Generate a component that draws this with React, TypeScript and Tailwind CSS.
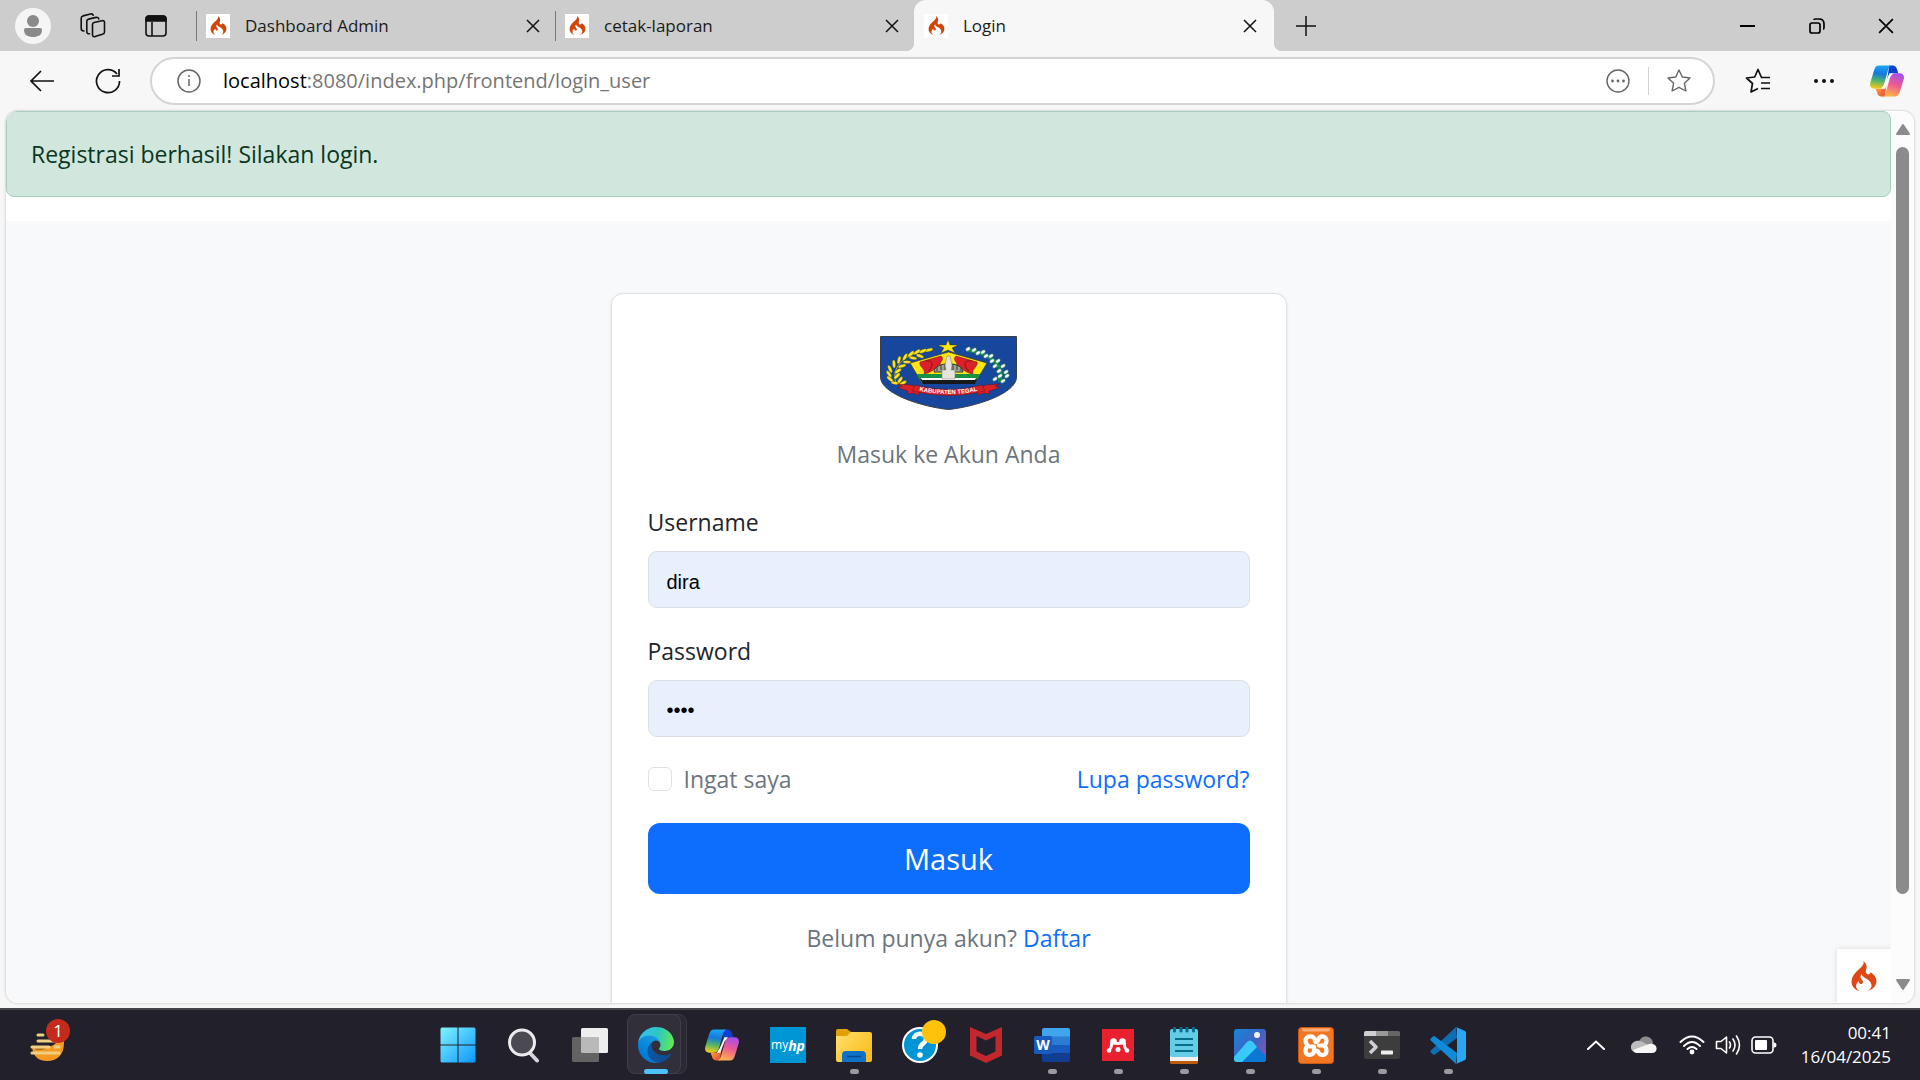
import React from "react";
import { SiCodeigniter } from "react-icons/si";

function EdgeIcon() {
  return (
    <svg viewBox="0 0 256 256" className="size-9" aria-hidden="true">
      <defs>
        <linearGradient id="edgeDeep" x1="60" y1="170" x2="235" y2="170" gradientUnits="userSpaceOnUse">
          <stop offset="0" stopColor="#0c59a4" />
          <stop offset="1" stopColor="#114a8b" />
        </linearGradient>
        <linearGradient id="edgeBlue" x1="155" y1="80" x2="45" y2="220" gradientUnits="userSpaceOnUse">
          <stop offset="0" stopColor="#1b9de2" />
          <stop offset="1" stopColor="#0078d7" />
        </linearGradient>
        <linearGradient id="edgeTeal" x1="0" y1="60" x2="256" y2="120" gradientUnits="userSpaceOnUse">
          <stop offset="0" stopColor="#35c1f1" />
          <stop offset="0.5" stopColor="#2cc6c6" />
          <stop offset="1" stopColor="#66eb4a" />
        </linearGradient>
      </defs>
      <path fill="url(#edgeDeep)" d="M231 190.5c-3.4 1.8-6.9 3.4-10.5 4.7-11.5 4.3-23.6 6.5-35.9 6.5-47.3 0-88.5-32.5-88.5-74.3.1-11.4 6.4-21.9 16.4-27.3-42.8 1.8-53.8 46.4-53.8 72.5 0 73.9 68.1 81.4 82.8 81.4 7.9 0 19.8-2.3 27-4.6l1.3-.4c27.6-9.5 51-28.1 66.6-52.8 1.2-1.9.6-4.3-1.2-5.5-1.3-.8-2.9-.9-4.2-.2z" />
      <path fill="url(#edgeBlue)" d="M105.7 241.4c-8.9-5.5-16.6-12.8-22.7-21.3-26.3-36-18.4-86.5 17.6-112.8 3.8-2.7 7.7-5.2 11.9-7.2 3.1-1.5 8.4-4.1 15.5-4 10.1.1 19.6 4.9 25.7 13 4 5.4 6.3 11.9 6.4 18.7 0-.2 24.5-79.6-80-79.6C36.2 48.2 0 90 0 126.6c-.2 19.3 4 38.5 12.1 56 27.6 58.8 94.8 87.6 156.4 67.1-21.1 6.6-44.1 3.6-62.8-8.3z" />
      <path fill="url(#edgeTeal)" d="M152.3 148.9c-.9 1-3.4 2.5-3.4 5.6 0 2.6 1.7 5.2 4.8 7.3 14.3 10 41.4 8.6 41.5 8.6 10.7 0 21.1-2.9 30.3-8.3 18.8-11 30.4-31.1 30.4-52.9.3-22.4-8-37.3-11.3-43.9C223.5 23.9 177.7 0 128 0 58 0 1 56.2 0 126.2c.5-36.5 36.8-66 80-66 3.5 0 23.5.3 42 10.1 16.3 8.6 24.9 18.9 30.8 29.2 6.2 10.7 7.3 24.1 7.3 29.5s-2.7 13.3-7.8 19.9z" />
    </svg>
  );
}

function CopilotIcon() {
  return (
    <svg viewBox="0 0 48 44" className="h-8 w-[34px]" aria-hidden="true">
      <defs>
        <linearGradient id="cpLeft" x1="14" y1="0" x2="9" y2="33" gradientUnits="userSpaceOnUse">
          <stop offset="0" stopColor="#1ba5f5" />
          <stop offset="0.35" stopColor="#1578dc" />
          <stop offset="0.65" stopColor="#4fb46a" />
          <stop offset="1" stopColor="#ffcb12" />
        </linearGradient>
        <linearGradient id="cpRight" x1="40" y1="11" x2="30" y2="44" gradientUnits="userSpaceOnUse">
          <stop offset="0" stopColor="#a24df0" />
          <stop offset="0.5" stopColor="#ee5b91" />
          <stop offset="1" stopColor="#ffb14a" />
        </linearGradient>
        <linearGradient id="cpBottom" x1="10" y1="33" x2="22" y2="44" gradientUnits="userSpaceOnUse">
          <stop offset="0" stopColor="#ff9a3c" />
          <stop offset="1" stopColor="#e5443c" />
        </linearGradient>
      </defs>
      <path fill="#1140cf" d="M27 0h5c3 0 5 2 6 5l2 6h-7c-4 0-6 3-7 6l-2 5z" />
      <path fill="url(#cpBottom)" d="M21 44h-5c-3 0-5-2-6-5l-2-6h7c4 0 6-3 7-6l2-5z" />
      <path fill="url(#cpLeft)" d="M13 0H31c-3 0-4.500 3-5.500 6L20 26c-1.500 5-4 7-8 7H6c-5 0-7-4-5.500-9L6 6C7.500 2 9 0 13 0z" />
      <path fill="url(#cpRight)" d="M35 44H17c3 0 4.500-3 5.500-6L28 18c1.500-5 4-7 8-7H42c5 0 7 4 5.500 9L42 38c-1.500 4-3 6-7 6z" />
      <path fill="#fff" d="M27.500 11h5l-5 6-6 16h-5l4-6z" />
    </svg>
  );
}

const leftLeaves = [
  [49, 14, -15], [43, 15, -25], [37, 16, -35], [31, 18, -45], [40, 20, 20], [33, 22, 10],
  [25, 21, -60], [19, 24, -75], [27, 26, 0], [14, 28, -95], [22, 30, -15], [10, 33, -115],
  [18, 35, -35], [9, 38, -125], [17, 40, -45], [10, 43, -140], [20, 44, -55], [15, 47, 10], [23, 47, -30],
];
const rightLeaves = [
  [88, 13], [94, 14], [98, 17], [103, 16], [106, 20], [111, 20], [112, 25], [118, 25],
  [115, 30], [123, 30], [119, 35], [126, 36], [120, 40], [127, 40], [115, 43], [123, 45],
];

function Emblem() {
  return (
    <svg viewBox="0 0 137 74" className="mx-auto h-[74px] w-[137px]" role="img" aria-label="Kabupaten Tegal">
      <path d="M.5 .5H136.500V41C136.500 58 94 71 68.500 73.500 43 71 .5 58 .5 41z" fill="#16479c" stroke="#3d4043" />
      <path d="M68 4l2 5h8l-6 3 3 5-7-3-7 3 3-5-6-3h8z" fill="#ffe512" stroke="#363a28" strokeWidth=".4" />
      <path d="M49 14C28 17 10 29 16 47" fill="none" stroke="#d9c51b" strokeWidth=".8" />
      {leftLeaves.map(([x, y, r]) => (
        <ellipse key={`${x}-${y}`} cx={x} cy={y} rx="4" ry="1.600" fill="#ffe512" stroke="#2d3425" strokeWidth=".3" transform={`rotate(${r} ${x} ${y})`} />
      ))}
      <path d="M87 14C108 17 127 29 119 46" fill="none" stroke="#0d8a4a" strokeWidth="3.500" />
      {rightLeaves.map(([x, y]) => (
        <ellipse key={`${x}-${y}`} cx={x} cy={y} rx="2.700" ry="1.700" fill="#fff" stroke="#14734a" strokeWidth=".5" transform={`rotate(-35 ${x} ${y})`} />
      ))}
      <path d="M68.500 16L107 27 95 47H42L30 27z" fill="#ffe512" stroke="#393b1f" strokeWidth=".7" />
      <path d="M40 26L61 20C65 24 60 25 60 29 54 33 51 37 44 38 46 33 38 30 40 26zM97 26L76 20C72 24 77 25 77 29 83 33 86 37 93 38 91 33 99 30 97 26z" fill="#dc2027" stroke="#5b1513" strokeWidth=".5" />
      <path d="M45 25q8-1 7 4t-4 6M92 25q-8-1-7 4t4 6" fill="none" stroke="#681718" strokeWidth=".8" />
      <path d="M54 36c0-11 29-11 29 0z" fill="#9fa392" stroke="#393b34" />
      <path d="M57 35V31M61 34V29M65 34V28M73 34V28M77 34V29M81 35V31" stroke="#393b34" />
      <path d="M37 38h25v-3h13v3h25l-3 6H40z" fill="#189143" />
      <path d="M40 43h57l-2 5H43z" fill="#17191b" />
      <path d="M41 42h55l-1 2H42z" fill="#fff" />
      <path d="M67 20h3l2 9-1 5h4v9H62v-9h4l-1-5z" fill="#e4e5de" stroke="#747969" strokeWidth=".5" />
      <path d="M17 48l14 1 8 3v7l-6-2-5 1 0-3-10-3 4-2zM120 48l-14 1-8 3v7l6-2 5 1v-3l10-3-4-2z" fill="#dc2027" stroke="#65191b" strokeWidth=".5" />
      <path d="M35 49q34 9 67 0l3 6q-36 9-73 0z" fill="#dc2027" stroke="#65191b" strokeWidth=".5" />
      <path id="ribbonLine" d="M36 54q33 8 65 0" fill="none" />
      <text fill="#fff" className="text-[6px] font-bold" style={{ fontFamily: "Liberation Sans, sans-serif" }}>
        <textPath href="#ribbonLine" startOffset="50%" textAnchor="middle">KABUPATEN TEGAL</textPath>
      </text>
    </svg>
  );
}

function Flame({ className }: { className: string }) {
  return <SiCodeigniter className={className} aria-hidden="true" />;
}

function CloseGlyph({ className }: { className: string }) {
  return (
    <svg viewBox="0 0 14 14" className={className} fill="none" stroke="currentColor" strokeWidth="1.500" aria-hidden="true">
      <path d="M1 1l12 12M13 1L1 13" />
    </svg>
  );
}

function Tab({ title, active = false }: { title: string; active?: boolean }) {
  return (
    <div
      className={
        active
          ? "relative flex h-full w-[360px] items-center rounded-t-xl bg-[#f7f7f7] pl-[10px] pr-3"
          : "flex h-full w-[359px] items-center pr-[10px]"
      }
    >
      {active ? (
        <>
          <span className="absolute bottom-0 -left-2 size-2 bg-[radial-gradient(circle_at_0_0,#cdcdcd_8px,#f7f7f7_8px)]" />
          <span className="absolute bottom-0 -right-2 size-2 bg-[radial-gradient(circle_at_100%_0,#cdcdcd_8px,#f7f7f7_8px)]" />
        </>
      ) : (
        <span className="mr-[9px] h-[30px] w-px bg-[#777]" />
      )}
      <button className="flex flex-1 items-center gap-[15px] text-left text-[17px] text-[#1b1b1b]">
        <span className="flex size-6 items-center justify-center bg-white">
          <Flame className="size-[19px] text-[#cf4409]" />
        </span>
        {title}
      </button>
      <button aria-label={`Close ${title}`} className="flex size-6 items-center justify-center">
        <CloseGlyph className="size-[14px]" />
      </button>
    </div>
  );
}

function TabStrip() {
  return (
    <header className="flex h-[51px] shrink-0 items-center bg-[#cdcdcd] text-[#111]">
      <div className="flex w-[196px] items-center pl-[15px]">
        <button aria-label="Profile" className="flex size-9 items-center justify-center rounded-full bg-[#f5f5f5]">
          <svg viewBox="0 0 20 24" className="h-6 w-5" fill="#8a8a8a" aria-hidden="true">
            <circle cx="10" cy="7" r="6" />
            <path d="M3 14h14q2 0 2 2c0 5-4 7-9 7s-9-2-9-7q0-2 2-2z" />
          </svg>
        </button>
        <button aria-label="Workspaces" className="ml-7 flex size-7 items-center justify-center">
          <svg viewBox="0 0 26 26" className="size-[26px]" fill="none" stroke="currentColor" strokeWidth="1.600" strokeLinejoin="round" strokeLinecap="round" aria-hidden="true">
            <path d="M14 9.500l8-1.800q2.500-.5 2.500 1.800v9.500q0 1.800-2 2.300L15 23.600q-2.500.6-2.500-1.800V11.500q0-1.600 1.500-2z" />
            <path d="M9.500 20.800q-2.700.2-2.700-2.300V8.300q0-1.800 1.800-2.200L16 4.400q2.500-.4 2.800 1.600" />
            <path d="M4 18q-2.800 0-2.800-2.500V5.200q0-1.800 1.800-2.300L10.500 1q2.200-.4 2.700 1.200" />
          </svg>
        </button>
        <button aria-label="Tab actions" className="ml-[35px] flex size-7 items-center justify-center">
          <svg viewBox="0 0 22 22" className="size-[22px]" fill="none" stroke="currentColor" strokeWidth="1.600" aria-hidden="true">
            <rect x="1" y="1" width="20" height="20" rx="3" />
            <path d="M1 6V4q0-3 3-3h14q3 0 3 3v2z" fill="currentColor" />
            <path d="M7 7v14" />
          </svg>
        </button>
      </div>
      <Tab title="Dashboard Admin" />
      <Tab title="cetak-laporan" />
      <Tab title="Login" active />
      <button aria-label="New tab" className="ml-5 flex size-6 items-center justify-center">
        <svg viewBox="0 0 20 20" className="size-5" fill="none" stroke="currentColor" strokeWidth="1.500" aria-hidden="true">
          <path d="M10 0v20M0 10h20" />
        </svg>
      </button>
      <div className="ml-auto flex h-full items-center">
        <button aria-label="Minimize" className="flex h-full w-[69px] items-center justify-center">
          <span className="h-0.5 w-[15px] bg-black" />
        </button>
        <button aria-label="Restore" className="flex h-full w-[69px] items-center justify-center">
          <svg viewBox="0 0 16 16" className="size-4" fill="none" stroke="black" strokeWidth="1.700" aria-hidden="true">
            <rect x="1" y="5" width="10" height="10" rx="2" />
            <path d="M5 2q0-1 2-1h3q5 0 5 5v3q0 2-1 2" />
          </svg>
        </button>
        <button aria-label="Close window" className="flex h-full w-[69px] items-center justify-center text-black">
          <CloseGlyph className="size-4" />
        </button>
      </div>
    </header>
  );
}

function Toolbar() {
  return (
    <div className="flex h-[60px] shrink-0 items-center bg-[#f7f7f7] text-[#111]">
      <button aria-label="Back" className="ml-7 flex size-7 items-center justify-center">
        <svg viewBox="0 0 26 22" className="h-[22px] w-[26px]" fill="none" stroke="currentColor" strokeWidth="1.700" aria-hidden="true">
          <path d="M25 11H2M12 1L2 11l10 10" />
        </svg>
      </button>
      <button aria-label="Refresh" className="ml-[38px] flex size-7 items-center justify-center">
        <svg viewBox="0 0 26 26" className="size-[26px]" fill="none" stroke="currentColor" strokeWidth="1.700" aria-hidden="true">
          <path d="M24.500 13A11.500 11.500 0 1 1 22 6M24 1v7h-7" />
        </svg>
      </button>
      <div className="ml-7 flex h-12 flex-1 items-center rounded-full border-2 border-[#d4d4d4] bg-white pr-[22px] pl-[25px]">
        <button aria-label="Site information" className="text-[#666]">
          <svg viewBox="0 0 24 24" className="size-6" fill="none" stroke="currentColor" strokeWidth="1.500" aria-hidden="true">
            <circle cx="12" cy="12" r="11" />
            <path d="M12 10v7M12 6v2" />
          </svg>
        </button>
        <label htmlFor="address" className="ml-[22px] text-[20px] text-black">localhost</label>
        <input id="address" type="text" defaultValue=":8080/index.php/frontend/login_user" className="min-w-0 flex-1 bg-transparent text-[20px] text-[#757575] outline-none" />
        <button aria-label="More in address bar" className="text-[#666]">
          <svg viewBox="0 0 24 24" className="size-6" fill="none" stroke="currentColor" strokeWidth="1.400" aria-hidden="true">
            <circle cx="12" cy="12" r="11" />
            <g fill="currentColor" stroke="none">
              <circle cx="6.500" cy="12" r="1.400" />
              <circle cx="12" cy="12" r="1.400" />
              <circle cx="17.500" cy="12" r="1.400" />
            </g>
          </svg>
        </button>
        <span className="mx-[18px] h-7 w-px bg-[#d2d2d2]" />
        <button aria-label="Add to favorites" className="text-[#666]">
          <svg viewBox="0 0 24 24" className="size-6" fill="none" stroke="currentColor" strokeWidth="1.400" strokeLinejoin="round" aria-hidden="true">
            <path d="M12 1l3.300 7 7.700 1-5.600 5.300L18.900 22 12 18.300 5.100 22l1.500-7.700L1 9l7.700-1z" />
          </svg>
        </button>
      </div>
      <div className="flex items-center pl-[30px] pr-4">
        <button aria-label="Favorites">
          <svg viewBox="0 0 26 26" className="size-[26px]" fill="none" stroke="currentColor" strokeWidth="1.700" strokeLinejoin="round" aria-hidden="true">
            <path d="M25 9.500h-8.500L13 1.500 9.700 9 1.500 10l6 5.500L6 24l7-3.500M16 15h9M16 20.500h9" />
          </svg>
        </button>
        <button aria-label="Settings and more" className="mr-9 ml-[43px]">
          <svg viewBox="0 0 20 4" className="h-1 w-5" fill="currentColor" aria-hidden="true">
            <circle cx="2" cy="2" r="2" />
            <circle cx="10" cy="2" r="2" />
            <circle cx="18" cy="2" r="2" />
          </svg>
        </button>
        <button aria-label="Copilot">
          <CopilotIcon />
        </button>
      </div>
    </div>
  );
}

function LoginCard() {
  return (
    <form className="mx-auto w-full max-w-[676px] rounded-xl border border-[#dee2e6] bg-white px-9 pt-[42px] pb-16 shadow-sm">
      <Emblem />
      <h1 className="mt-[26px] text-center leading-9 text-[#6c757d]">Masuk ke Akun Anda</h1>
      <label htmlFor="username" className="mt-8 block leading-9">Username</label>
      <input id="username" type="text" defaultValue="dira" className="mt-[11px] h-[57px] w-full rounded-[9px] border border-[#dbdfe5] bg-[#e8f0fe] px-[18px] pt-[6px] text-[20px] text-black outline-none [font-family:'Liberation_Sans',sans-serif]" />
      <label htmlFor="password" className="mt-[25px] block leading-9">Password</label>
      <input id="password" type="password" defaultValue="dira" className="mt-[11px] h-[57px] w-full rounded-[9px] border border-[#dbdfe5] bg-[#e8f0fe] px-[18px] pt-1 text-[20px] text-black outline-none [font-family:'Liberation_Sans',sans-serif]" />
      <div className="mt-6 flex items-center justify-between leading-9">
        <label className="flex items-center gap-3 text-[#6c757d]">
          <input type="checkbox" className="size-6 appearance-none rounded-md border border-[#dee2e6] bg-white" />
          Ingat saya
        </label>
        <a href="#lupa" className="text-[#0d6efd]">Lupa password?</a>
      </div>
      <button type="button" className="mt-[26px] h-[71px] w-full rounded-xl bg-[#0d6efd] text-[29px] text-white">Masuk</button>
      <p className="mt-[26px] text-center leading-9 text-[#6c757d]">
        Belum punya akun? <a href="#daftar" className="text-[#0d6efd]">Daftar</a>
      </p>
    </form>
  );
}

function Viewport() {
  return (
    <main className="flex min-h-0 flex-1 bg-[#f7f7f7] px-1.5 pb-[5px]">
      <div className="flex min-w-0 flex-1 overflow-hidden rounded-xl bg-white shadow-[0_0_2px_1px_#d8d8d8]">
        <div className="relative flex min-w-0 flex-1 flex-col overflow-hidden text-[23px] text-[#212529]">
          <div role="alert" className="mb-6 shrink-0 rounded-lg border border-[#a3cfbb] bg-[#d1e7dd] px-6 py-6 leading-9 text-[#0a3622]">
            Registrasi berhasil! Silakan login.
          </div>
          <div className="flex-1 bg-[#f8f9fa] pt-[72px]">
            <LoginCard />
          </div>
          <button aria-label="Debug toolbar" className="absolute right-0 bottom-0 flex size-[54px] items-center justify-center bg-white shadow-[0_0_6px_#ddd]">
            <Flame className="size-[30px] text-[#dd4814]" />
          </button>
        </div>
        <div className="flex w-[23px] flex-col items-center bg-[#fcfcfc] pt-3 pb-3" aria-hidden="true">
          <svg viewBox="0 0 14 12" className="h-3 w-[14px]" fill="#8b8b8b" stroke="#8b8b8b" strokeWidth="2" strokeLinejoin="round">
            <path d="M7 2l6 9H1z" />
          </svg>
          <div className="mt-3 mb-[85px] w-[13px] flex-1 rounded-full bg-[#8b8b8b]" />
          <svg viewBox="0 0 14 12" className="h-3 w-[14px]" fill="#8b8b8b" stroke="#8b8b8b" strokeWidth="2" strokeLinejoin="round">
            <path d="M7 10L1 1h12z" />
          </svg>
        </div>
      </div>
    </main>
  );
}

type AppEntry = { name: string; running?: boolean; icon: React.ReactNode };

const apps: AppEntry[] = [
  {
    name: "Start",
    icon: (
      <svg viewBox="0 0 36 36" className="size-9">
        <defs>
          <linearGradient id="winFill" x1="0" y1="0" x2="36" y2="36" gradientUnits="userSpaceOnUse">
            <stop offset="0" stopColor="#80f5ff" />
            <stop offset="1" stopColor="#0a95ff" />
          </linearGradient>
        </defs>
        <path fill="url(#winFill)" d="M2 .5h15.500v17H.5V2Q.5.500 2 .5zM18.500.500H34q1.500 0 1.500 1.500v15.500h-17zM.5 18.500h17v17H2q-1.500 0-1.500-1.500zM18.500 18.500h17V34q0 1.500-1.500 1.500H18.500z" />
      </svg>
    ),
  },
  {
    name: "Search",
    icon: (
      <svg viewBox="0 0 36 36" className="size-9" fill="none">
        <path d="M23 25l8 8.500" stroke="#d5d5da" strokeWidth="4" strokeLinecap="round" />
        <circle cx="16" cy="15.500" r="12.500" fill="#4b4a53" stroke="#ececee" strokeWidth="3" />
      </svg>
    ),
  },
  {
    name: "Task View",
    icon: (
      <svg viewBox="0 0 36 36" className="size-9">
        <rect x="9" y="1" width="27" height="25" rx="1.500" fill="#eeeeee" />
        <rect x="0" y="10" width="27" height="25" rx="1.500" fill="#636363" />
        <path d="M9 10h18v16H10.500Q9 26 9 24.500z" fill="#b9b9b9" />
      </svg>
    ),
  },
  { name: "Microsoft Edge", running: true, icon: <EdgeIcon /> },
  { name: "Copilot", icon: <CopilotIcon /> },
  {
    name: "myHP",
    icon: (
      <span className="flex size-9 items-center justify-center bg-[#0096d6] text-[12px] text-white">
        my<b className="text-[14px] italic">hp</b>
      </span>
    ),
  },
  {
    name: "File Explorer",
    running: true,
    icon: (
      <svg viewBox="0 0 36 36" className="size-9">
        <defs>
          <linearGradient id="folderFill" x1="0" y1="5" x2="36" y2="36" gradientUnits="userSpaceOnUse">
            <stop offset="0" stopColor="#ffe06c" />
            <stop offset="1" stopColor="#fbb812" />
          </linearGradient>
        </defs>
        <path d="M0 4q0-2 2-2h9l4 3v5H0z" fill="#e0a106" />
        <path d="M0 9h11l4-4h19q2 0 2 2v26q0 2-2 2H2q-2 0-2-2z" fill="url(#folderFill)" />
        <path d="M6 35V28q0-4 4-4h16q4 0 4 4v7z" fill="#0f72c8" />
        <path d="M11 29.500h14" stroke="#0a4a8a" strokeWidth="1.500" />
      </svg>
    ),
  },
  {
    name: "HP Support Assistant",
    icon: (
      <svg viewBox="0 0 44 44" className="-mt-2 size-11 overflow-visible">
        <circle cx="22" cy="26" r="17" fill="#0096d6" stroke="#fff" strokeWidth="2" />
        <path d="M16 20c0-7 12-7 12 0 0 5-6 4-6 10" fill="none" stroke="#fff" strokeWidth="4.500" />
        <circle cx="22" cy="36" r="2.800" fill="#fff" />
        <circle cx="36" cy="13" r="12" fill="#ffc20a" />
      </svg>
    ),
  },
  {
    name: "McAfee",
    icon: (
      <svg viewBox="0 0 32 36" className="h-9 w-8">
        <path fill="#c1272d" fillRule="evenodd" d="M0 0l16 7L32 0v28.500L16 36 0 28.500zM6.500 9v15.500L16 29l9.500-4.500V9L16 13.500z" />
      </svg>
    ),
  },
  {
    name: "Word",
    running: true,
    icon: (
      <svg viewBox="0 0 36 34" className="h-[34px] w-9">
        <path d="M8 2q0-2 2-2h24q2 0 2 2v7H8z" fill="#41a5ee" />
        <path d="M8 8.500h28v8.500H8z" fill="#2b7cd3" />
        <path d="M8 17h28v8.500H8z" fill="#185abd" />
        <path d="M8 25.500h28V32q0 2-2 2H10q-2 0-2-2z" fill="#103f91" />
        <rect y="8" width="18" height="18" rx="1.500" fill="#185abd" />
        <text x="9" y="22" textAnchor="middle" fill="#fff" className="text-[14px] font-bold">W</text>
      </svg>
    ),
  },
  {
    name: "Mendeley",
    running: true,
    icon: (
      <svg viewBox="0 0 32 32" className="size-8">
        <rect width="32" height="32" fill="#e9202d" />
        <g fill="#fff">
          <circle cx="11.500" cy="12.500" r="3.300" />
          <circle cx="20.500" cy="12.500" r="3.300" />
          <circle cx="16" cy="20.500" r="2.500" />
          <circle cx="7" cy="21.500" r="2.300" />
          <circle cx="25" cy="21.500" r="2.300" />
        </g>
        <path d="M7.500 20.500q2.500-2 2-7M24.500 20.500q-2.500-2-2-7M12 13.500q4 2 8 0" fill="none" stroke="#fff" strokeWidth="3" />
      </svg>
    ),
  },
  {
    name: "Notepad",
    running: true,
    icon: (
      <svg viewBox="0 0 28 37" className="h-[37px] w-7">
        <rect y="29" width="28" height="8" rx="1.500" fill="#bd5b0f" />
        <rect y="27" width="28" height="7" fill="#f1f1f1" />
        <rect y="2" width="28" height="28" rx="2" fill="#65cce6" />
        <path d="M5 12h18M5 18h18M5 24h18" stroke="#0a6c8c" strokeWidth="2" />
        <path d="M4.500 1v3M11 1v3M17 1v3M23.500 1v3" stroke="#0a6c8c" strokeWidth="3" strokeLinecap="round" />
      </svg>
    ),
  },
  {
    name: "Photos",
    running: true,
    icon: (
      <svg viewBox="0 0 32 33" className="h-[33px] w-8">
        <defs>
          <linearGradient id="photoSky" x1="0" y1="0" x2="32" y2="28" gradientUnits="userSpaceOnUse">
            <stop offset="0" stopColor="#1387dd" />
            <stop offset="0.550" stopColor="#3f63c0" />
            <stop offset="1" stopColor="#8a55b5" />
          </linearGradient>
        </defs>
        <rect width="32" height="33" rx="3" fill="url(#photoSky)" />
        <path d="M9 31L19 19q3-2 5 0l8 8v3q0 3-3 3H6z" fill="#0a78d4" />
        <path d="M0 28L13 13q3-3 6 0l4 5L8 33H3q-3 0-3-3z" fill="#38c9f8" />
        <circle cx="23" cy="6" r="3" fill="#f3f3f7" />
      </svg>
    ),
  },
  {
    name: "XAMPP",
    running: true,
    icon: (
      <svg viewBox="0 0 36 37" className="h-[37px] w-9">
        <rect x=".5" y=".5" width="35" height="36" rx="3" fill="#f37623" stroke="#c95812" />
        <path d="M4 1.500h28q0 3-3 3H7q-3 0-3-3z" fill="#fbb07c" />
        <g fill="none" stroke="#fff" strokeWidth="4.200" strokeLinecap="round" strokeLinejoin="round">
          <path d="M17 13.500C17 8 7.500 8 7.500 13.500Q7.500 16.500 10 18.500 7.500 20.500 7.500 24C7.500 29.500 16 29 16 24V19.500H10.500" />
          <path d="M17 14.500Q18 16 20 13.500C21 8 28.500 8 28.500 13.500Q28.500 16.500 26 18.500 28.500 20.500 28.500 24C28.500 29.500 21 29 20 24.500Q18 23 16.500 24" />
          <path d="M26 18.500h-5" />
        </g>
      </svg>
    ),
  },
  {
    name: "Terminal",
    running: true,
    icon: (
      <svg viewBox="0 0 36 28" className="h-7 w-9">
        <rect width="36" height="28" rx="2" fill="#3d3d3d" />
        <path d="M0 5V2q0-2 2-2h10v5z" fill="#cfcfcf" />
        <path d="M12 0h12v5H12z" fill="#999" />
        <path d="M24 0h10q2 0 2 2v3H24z" fill="#666" />
        <path d="M6 10l6 6-6 6" fill="none" stroke="#d0d0d0" strokeWidth="3.500" strokeLinejoin="round" />
        <rect x="17" y="19.500" width="12" height="4" rx=".7" fill="#efefef" />
      </svg>
    ),
  },
  {
    name: "Visual Studio Code",
    running: true,
    icon: (
      <svg viewBox="0 0 36 37" className="h-[37px] w-9">
        <path d="M26 0L.8 23.500q-1 1 0 2L3 27.500q1 .8 2 0L27 11z" fill="#0e6eb3" />
        <path d="M26 37L.8 13.500q-1-1 0-2L3 9.500q1-.8 2 0L27 26z" fill="#0f8bd8" />
        <path d="M26 0l9 4q1 .5 1 2v25q0 1.500-1 2l-9 4q1-.5 1-3V3q0-2.500-1-3z" fill="#2ba7f2" />
      </svg>
    ),
  },
];

function Taskbar() {
  return (
    <footer className="grid h-[72px] shrink-0 grid-cols-[1fr_auto_1fr] items-center border-t-2 border-[#45444b] bg-[#21202b] text-white">
      <button aria-label="Widgets" className="relative ml-[29px] h-[52px] w-[44px]">
        <svg viewBox="0 0 44 52" className="h-[52px] w-[44px]" aria-hidden="true">
          <path d="M3 28h13c8 0 12-4 14-9h5v5c0 12-7 18-17 18C10 42 6 38 4 33z" fill="#f49a23" />
          <path d="M5 28h13q-4 4-11 3z" fill="#a9731f" />
          <path d="M9 16h5M9 22h23M3 28h17M26 28h4M3 34h27" stroke="#f1cf80" strokeWidth="3" strokeLinecap="round" />
        </svg>
        <span className="absolute top-0 left-[17px] flex size-6 items-center justify-center rounded-full bg-[#c42b1c] text-[17px]">1</span>
      </button>
      <nav aria-label="Taskbar apps" className="mr-[14px] flex">
        {apps.map((app) => (
          <button key={app.name} aria-label={app.name} className="relative flex h-[70px] w-[66px] items-center justify-center">
            {app.name === "Microsoft Edge" && (
              <>
                <span className="absolute top-1 left-2 h-[60px] w-[56px] rounded-lg border border-[#3b3944] bg-[#2b2934]" />
                <span className="absolute top-1 left-1 h-[60px] w-[54px] rounded-lg border border-[#413f49] bg-[#312f39]" />
              </>
            )}
            <span className="relative">{app.icon}</span>
            {app.running && (
              <span
                className={
                  app.name === "Microsoft Edge"
                    ? "absolute bottom-[6px] left-[21px] h-[5px] w-6 rounded-full bg-[#4cc2ff]"
                    : "absolute bottom-[6px] h-[5px] w-[9px] rounded-full bg-[#9a9a9f]"
                }
              />
            )}
          </button>
        ))}
      </nav>
      <div className="flex items-center justify-end pr-[29px]">
        <button aria-label="Show hidden icons">
          <svg viewBox="0 0 18 10" className="h-[10px] w-[18px]" fill="none" stroke="#fff" strokeWidth="2" strokeLinecap="round">
            <path d="M1 9l8-7.500L17 9" />
          </svg>
        </button>
        <button aria-label="OneDrive" className="ml-[26px]">
          <svg viewBox="0 0 26 18" className="h-[18px] w-[26px]">
            <path d="M8 6c2-8 13-7 14 1l-5 6z" fill="#8c8c8f" />
            <path d="M6 17c-8-1-8-10-1-12 5-1 8 2 14 5L9 17z" fill="#bcbcbe" />
            <path d="M2 14l16-6c9-2 10 9 3 9H6q-3 0-4-3z" fill="#f6f6f6" />
          </svg>
        </button>
        <button aria-label="Network, volume and battery" className="ml-[22px] flex items-center gap-[10px]">
          <svg viewBox="0 0 26 20" className="h-5 w-[26px]" fill="none" stroke="#fff" strokeWidth="1.900" strokeLinecap="round">
            <path d="M1.500 7q11.500-11 23 0M5 11q8-8 16 0M8.500 14q4.500-4 9 0" />
            <circle cx="13" cy="17" r="1.500" fill="#fff" />
          </svg>
          <svg viewBox="0 0 26 20" className="h-5 w-[26px]" fill="none" stroke="#fff" strokeWidth="1.600" strokeLinejoin="round" strokeLinecap="round">
            <path d="M1.500 6.500h4.500L11.500 2v16L6 13.500H1.500zM14.500 7q2 3 0 6M18 4q4 6 0 12M21.500 1q6 9 0 18" />
          </svg>
          <svg viewBox="0 0 26 18" className="h-[18px] w-[26px]" fill="none" stroke="#fff" strokeWidth="1.600">
            <rect x="1" y="1" width="21" height="16" rx="3.500" />
            <rect x="4" y="4" width="12" height="10" rx="1" fill="#fff" stroke="none" />
            <path d="M22.500 6.500q3-.5 3 2.500t-3 2.500z" fill="#fff" stroke="none" />
          </svg>
        </button>
        <button className="ml-6 text-right text-[17px] leading-6">
          <span className="block">00:41</span>
          <span className="block">16/04/2025</span>
        </button>
      </div>
    </footer>
  );
}

export default function App() {
  return (
    <div className="flex h-screen flex-col overflow-hidden [font-family:'Open_Sans','Noto_Sans',sans-serif]">
      <TabStrip />
      <Toolbar />
      <Viewport />
      <Taskbar />
    </div>
  );
}
